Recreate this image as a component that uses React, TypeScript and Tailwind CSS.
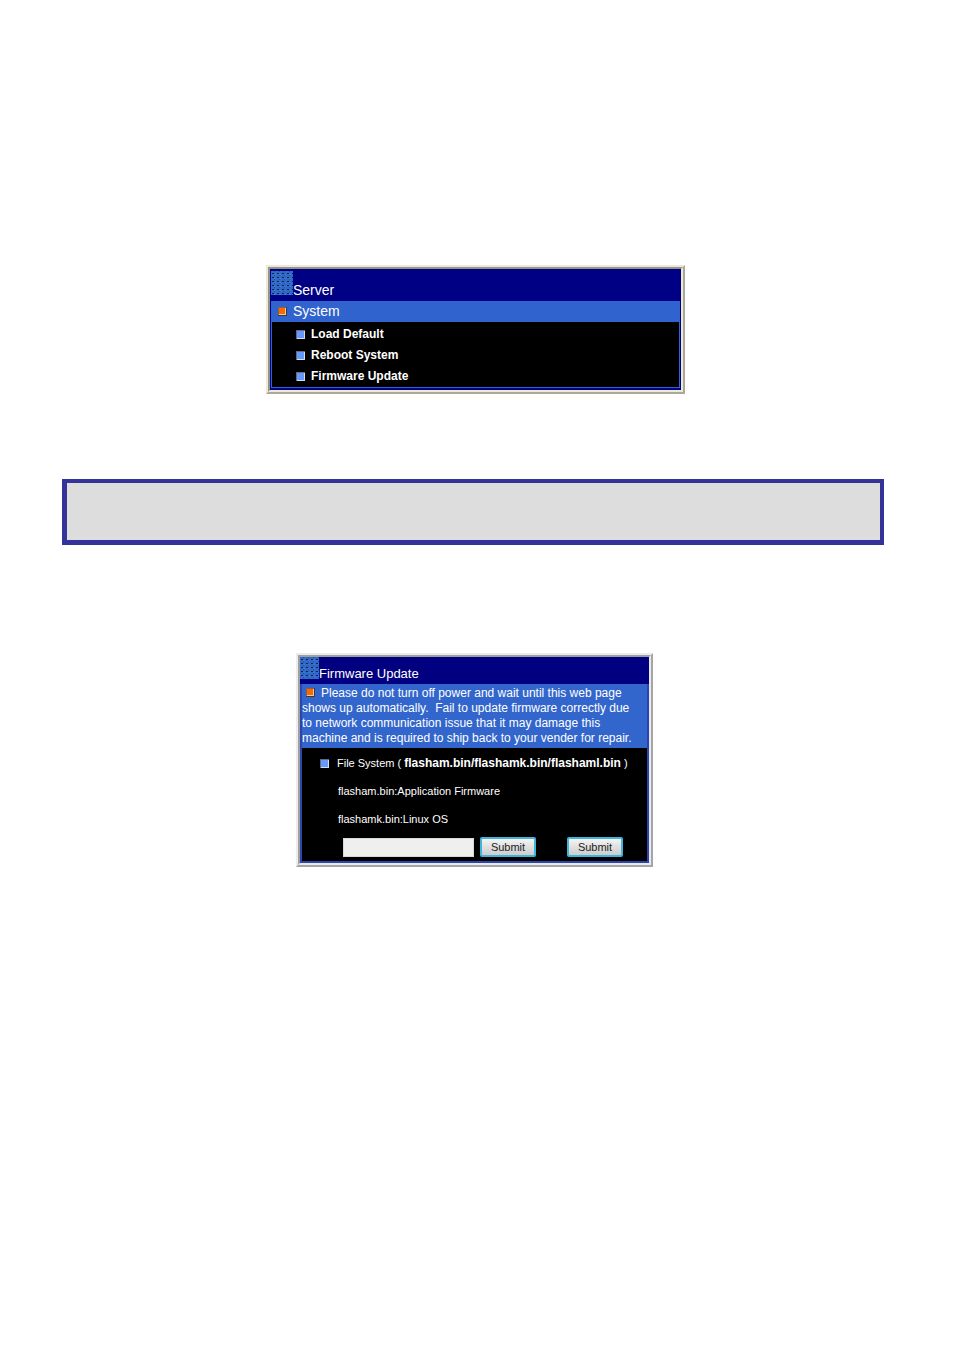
import type { ReactNode } from 'react';

const systemLinks = ['Load Default', 'Reboot System', 'Firmware Update'];

function Bullet({ active = false }: { active?: boolean }) {
    return (
        <svg width="9" height="9" viewBox="0 0 9 9" className="inline-block shrink-0 align-baseline" aria-hidden="true">
            <path d="M0 0h9v9H0z" fill={active ? '#c9b48c' : '#d8dce4'} />
            <path d="M0 0h9v1H1v8H0z" fill={active ? '#84644c' : '#666a74'} />
            <path d="M1 1h7v7H1z" fill={active ? '#ff6600' : '#6699ff'} />
            {active && <path d="M8 0h1v9H0V8h8z" fill="#3c3a34" />}
            {active && <path d="M7 1h1v7H1V7h6z" fill="#e8cfa0" />}
        </svg>
    );
}

// Dotted blue tile in the corner of each panel header
function Texture({ className }: { className: string }) {
    return (
        <svg className={className} aria-hidden="true">
            <defs>
                <pattern id="weave" width="5" height="4" patternUnits="userSpaceOnUse">
                    <path d="M0 0h5v4H0z" fill="#3169c6" />
                    <path d="M1 2h2v1H1z" fill="#0c2450" />
                    <path d="M3 0h1v1H3z" fill="#1f4c9c" />
                    <path d="M3 3h2v1H3z" fill="#3f78d4" />
                </pattern>
            </defs>
            <rect width="100%" height="100%" fill="url(#weave)" />
        </svg>
    );
}

function SubmitButton({ children }: { children: ReactNode }) {
    return (
        <button
            type="submit"
            className="h-5 w-14 rounded-xs border-2 border-[#3fb5dc] bg-linear-to-b from-[#f4f4f4] to-[#cdcdcd] text-[11px] leading-4 text-[#222]"
        >
            {children}
        </button>
    );
}

export default function App() {
    return (
        <main className="min-h-screen bg-white pt-[265px] pr-0.5 font-['Liberation_Sans',Arial,sans-serif] text-white">
            {/* Server menu */}
            <section className="mx-auto w-full max-w-[419px] border-2 border-t-[#ece9d8] border-r-[#aca899] border-b-[#aca899] border-l-[#ece9d8]">
                <div className="border-2 border-t-[#96938a] border-r-[#ece9d8] border-b-[#ece9d8] border-l-[#96938a] bg-[#000084] px-px pb-0.5">
                    <header className="flex h-8 items-start pt-0.5">
                        <Texture className="h-6 w-[22px]" />
                        <h1 className="pt-[11px] text-sm leading-4">Server</h1>
                    </header>
                    <div className="border border-[#3163ce]">
                        <div className="flex h-5 items-start gap-1.5 bg-[#3163ce] pl-1.5">
                            <span className="flex h-[18px] items-center">
                                <Bullet active />
                            </span>
                            <h2 className="text-sm leading-[18px]">System</h2>
                        </div>
                        <ul className="bg-black pt-0.5 pl-6 text-xs font-bold">
                            {systemLinks.map((label) => (
                                <li key={label} className="h-[21px]">
                                    <a href="#" className="flex items-center gap-1.5 leading-5">
                                        <Bullet />
                                        {label}
                                    </a>
                                </li>
                            ))}
                        </ul>
                    </div>
                </div>
            </section>

            {/* Empty note box */}
            <div className="mt-[85px] mr-[67px] ml-[62px] h-[66px] border-4 border-b-5 border-l-5 border-[#333399] bg-[#dddddd]" />

            {/* Firmware update form */}
            <div className="mt-[108px] pr-0.5">
                <section className="mx-auto w-full max-w-[357px] border-2 border-t-[#ececec] border-r-[#a5a5a5] border-b-[#a5a5a5] border-l-[#ececec]">
                    <div className="border-2 border-t-[#a0a0a0] border-r-[#e8e8f0] border-b-[#e8e8f0] border-l-[#a0a0a0] bg-[#000080]">
                        <header className="flex h-[27px] items-start">
                            <Texture className="h-[22px] w-[19px]" />
                            <h1 className="pt-[9px] text-[13px] leading-4">Firmware Update</h1>
                        </header>
                        <form className="border-2 border-t-0 border-[#2b45ac] bg-black" onSubmit={(e) => e.preventDefault()}>
                            <p className="h-16 bg-[#3366cc] pt-0.5 text-xs leading-[15px] whitespace-nowrap">
                                <span className="pr-1.5 pl-1">
                                    <Bullet active />
                                </span>
                                Please do not turn off power and wait until this web page
                                <br />
                                shows up automatically.&nbsp; Fail to update firmware correctly due
                                <br />
                                to network communication issue that it may damage this
                                <br />
                                machine and is required to ship back to your vender for repair.
                            </p>
                            <div className="pt-[7px] pl-[18px] text-[11px] leading-4">
                                <label htmlFor="firmware" className="flex items-center gap-2">
                                    <Bullet />
                                    <span>
                                        File System ( <b className="text-xs leading-4">flasham.bin/flashamk.bin/flashaml.bin</b> )
                                    </span>
                                </label>
                                <p className="mt-3 pl-[18px]">flasham.bin:Application Firmware</p>
                                <p className="mt-3 pl-[18px]">flashamk.bin:Linux OS</p>
                                <div className="mt-2.5 flex items-center pb-1 pl-[23px]">
                                    <input
                                        id="firmware"
                                        type="text"
                                        className="mr-1.5 h-[19px] w-[131px] border border-[#d8d8d8] bg-[#efefef] px-1 text-black"
                                    />
                                    <SubmitButton>Submit</SubmitButton>
                                    <span className="w-[31px]" />
                                    <SubmitButton>Submit</SubmitButton>
                                </div>
                            </div>
                        </form>
                    </div>
                </section>
            </div>
        </main>
    );
}
